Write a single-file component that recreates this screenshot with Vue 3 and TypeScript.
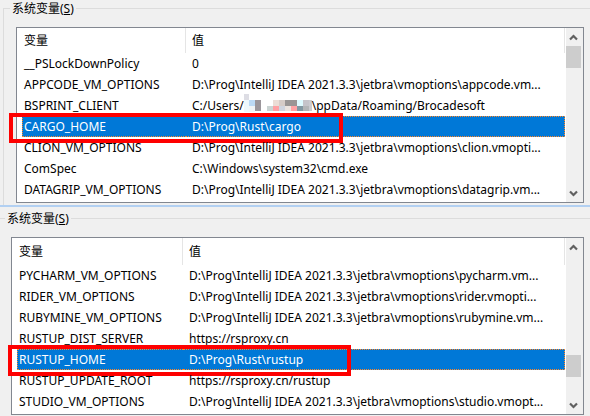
<script setup lang="ts">
interface Variable {
  name: string
  value: string
  tail?: string
  selected?: boolean
}

interface Panel {
  id: string
  rows: Variable[]
  before: number
  after: number
}

const vmPath = 'D:\\Prog\\IntelliJ IDEA 2021.3.3\\jetbra\\vmoptions\\'

const panels: Panel[] = [
  {
    id: 'first',
    before: 0,
    after: 1,
    rows: [
      { name: '__PSLockDownPolicy', value: '0' },
      { name: 'APPCODE_VM_OPTIONS', value: vmPath + 'appcode.vm...' },
      { name: 'BSPRINT_CLIENT', value: 'C:/Users/', tail: '\\ppData/Roaming/Brocadesoft' },
      { name: 'CARGO_HOME', value: 'D:\\Prog\\Rust\\cargo', selected: true },
      { name: 'CLION_VM_OPTIONS', value: vmPath + 'clion.vmopti...' },
      { name: 'ComSpec', value: 'C:\\Windows\\system32\\cmd.exe' },
      { name: 'DATAGRIP_VM_OPTIONS', value: vmPath + 'datagrip.vm...' },
    ],
  },
  {
    id: 'second',
    before: 84,
    after: 16,
    rows: [
      { name: 'PYCHARM_VM_OPTIONS', value: vmPath + 'pycharm.vm...' },
      { name: 'RIDER_VM_OPTIONS', value: vmPath + 'rider.vmopti...' },
      { name: 'RUBYMINE_VM_OPTIONS', value: vmPath + 'rubymine.vm...' },
      { name: 'RUSTUP_DIST_SERVER', value: 'https://rsproxy.cn' },
      { name: 'RUSTUP_HOME', value: 'D:\\Prog\\Rust\\rustup', selected: true },
      { name: 'RUSTUP_UPDATE_ROOT', value: 'https://rsproxy.cn/rustup' },
      { name: 'STUDIO_VM_OPTIONS', value: vmPath + 'studio.vmopt...' },
    ],
  },
]

// Pixelated blocks that hide the user name: x, y, width, height, colour
const mosaic: [number, number, number, number, string][] = [
  [0, 0, 5, 6, '#dddde4'],
  [0, 6, 5, 12, '#edf8fd'],
  [5, 6, 6, 6, '#bcdaf5'],
  [5, 12, 6, 6, '#f0f4f6'],
  [11, 6, 6, 11, '#9b969b'],
  [23, 12, 6, 5, '#cbd4d3'],
  [29, 6, 6, 6, '#ebddd6'],
  [29, 12, 6, 5, '#ffa0a3'],
  [35, 6, 6, 6, '#d6ccc8'],
  [35, 12, 6, 5, '#d0d5e0'],
  [41, 6, 12, 6, '#999595'],
  [41, 12, 6, 5, '#ece4e0'],
  [47, 12, 6, 5, '#ffa3a6'],
  [53, 6, 6, 6, '#defaff'],
  [53, 12, 6, 5, '#8298a2'],
  [59, 6, 6, 6, '#c5c4ca'],
  [59, 12, 6, 5, '#b3b5b7'],
  [65, 6, 3, 11, '#cbcbd0'],
]
</script>

<template>
  <main class="page">
    <section v-for="panel in panels" :key="panel.id" class="pane" :class="panel.id">
      <fieldset class="group">
        <legend>系统变量(<u>S</u>)</legend>
        <div class="list">
          <table>
            <thead>
              <tr>
                <th class="name" scope="col">变量</th>
                <th scope="col">值</th>
              </tr>
            </thead>
            <tbody>
              <tr v-for="row in panel.rows" :key="row.name" :class="{ selected: row.selected }">
                <td class="name">{{ row.name }}<span v-if="row.selected" class="marker"></span></td>
                <td>{{ row.value }}<template v-if="row.tail"><svg class="mosaic" width="68" height="18" viewBox="0 0 68 18" shape-rendering="crispEdges" aria-hidden="true"><rect v-for="(b, i) in mosaic" :key="i" :x="b[0]" :y="b[1]" :width="b[2]" :height="b[3]" :fill="b[4]" /></svg>{{ row.tail }}</template></td>
              </tr>
            </tbody>
          </table>
          <div class="scrollbar">
            <button type="button" aria-label="Up">
              <svg width="9" height="7" viewBox="0 0 9 7"><path d="M1 5.5 4.5 2 8 5.5" /></svg>
            </button>
            <div class="track">
              <div :style="{ flexGrow: panel.before }"></div>
              <div class="thumb"></div>
              <div :style="{ flexGrow: panel.after }"></div>
            </div>
            <button type="button" aria-label="Down">
              <svg width="9" height="7" viewBox="0 0 9 7"><path d="M1 1.5 4.5 5 8 1.5" /></svg>
            </button>
          </div>
        </div>
      </fieldset>
    </section>
  </main>
</template>

<style>
body {
  margin: 0;
  background: #f0f0f0;
}
</style>

<style scoped>
.page {
  font-family: "Noto Sans", "Noto Sans CJK SC", sans-serif;
  font-size: 12px;
  color: #000;
}
.second {
  padding-top: 3px;
  border-top: 2px solid #b2d0f2;
}
.group {
  min-width: 0;
  margin: 0;
  padding: 0 6px 0 12px;
  border: 0 solid #dcdcdc;
  border-top-width: 1px;
}
.first .group {
  margin-left: 3px;
  padding-bottom: 2px;
  border-left-width: 1px;
}
.second .group {
  padding-left: 11px;
}
legend {
  height: 17px;
  margin-left: -6px;
  padding: 0 2px;
  line-height: 18px;
}
.list {
  display: flex;
  margin-top: 10px;
  padding: 0 2px 0 5px;
  border: 1px solid #828790;
  background: linear-gradient(to left, #f0f0f0 2px, #fff 2px);
}
table {
  flex: 1;
  min-width: 0;
  margin-bottom: 2px;
  table-layout: fixed;
  border-collapse: separate;
  border-spacing: 0;
}
th,
td {
  height: 21px;
  padding: 0 0 0 6px;
  line-height: 19px;
  text-align: left;
  font-weight: 400;
  white-space: nowrap;
}
th {
  height: 25px;
  border-right: 1px solid #e5e5e5;
}
.second th {
  height: 27px;
}
.name {
  width: 164px;
  padding-left: 2px;
  box-sizing: border-box;
}
.second .name {
  width: 166px;
}
tr {
  position: relative;
}
.selected td {
  color: #fff;
  background: #0078d7;
  border: 0 dotted #ff8728;
  border-width: 1px 0;
  height: 19px;
}
.selected .name {
  border-left-width: 1px;
  padding-left: 1px;
}
.selected td:last-child {
  border-right-width: 1px;
}
.marker {
  position: absolute;
  left: -13px;
  top: -3px;
  width: 334px;
  height: 30px;
  box-sizing: border-box;
  border: 4px solid #fe0000;
}
.second .marker {
  left: -9px;
  top: -4px;
  width: 343px;
  height: 31px;
}
.mosaic {
  margin-top: -4px;
  vertical-align: -2px;
}
.scrollbar {
  display: flex;
  flex-direction: column;
  width: 15px;
  margin-left: 1px;
  background: #f0f0f0;
}
button {
  display: flex;
  align-items: center;
  justify-content: center;
  height: 18px;
  padding: 0;
  border: 0;
  background: none;
}
path {
  fill: none;
  stroke: #606060;
  stroke-width: 2.2;
}
.track {
  flex: 1;
  display: flex;
  flex-direction: column;
}
.thumb {
  height: 22px;
  background: #cdcdcd;
}
</style>
